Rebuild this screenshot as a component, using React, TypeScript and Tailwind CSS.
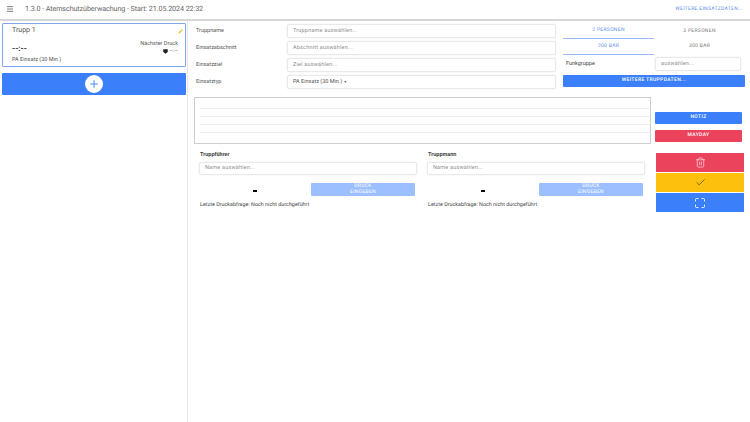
import { Menu, Pencil, Plus, Trash2, Check, Maximize } from "lucide-react";

const field = "h-[14px] flex items-center bg-white rounded-[2px] border border-[#e9e9e9] shadow-[0_0_2px_rgba(0,0,0,0.08)] px-[5px] text-[5.5px] text-[#8f8f8f] tracking-[0.2px]";

function Row({ label, children }: { label: string; children: React.ReactNode }) {
  return (
    <div className="flex items-center h-[14px]">
      <div className="w-[91px] text-[5.5px] text-[#555]">{label}</div>
      <div className="w-[269px]">{children}</div>
    </div>
  );
}

function Member({ name }: { name: string }) {
  return (
    <div className="w-[218px]">
      <div className="h-[9px] flex items-center pl-px text-[5.5px] font-bold text-[#444]">{name}</div>
      <div className={field + " !h-[13px] mt-[2px]"}>Name auswählen...</div>
      <div className="flex items-center mt-[8px]">
        <div className="w-[112px] flex justify-center"><span className="block w-[4px] h-[2px] bg-black mt-[3px]" /></div>
        <div className="w-[104px] h-[13px] rounded-[1px] bg-[#9cbfff] text-white text-[5px] leading-[5.5px] text-center flex items-center justify-center tracking-[0.3px]">DRUCK<br />EINGEBEN</div>
      </div>
      <div className="mt-[5px] pl-px text-[5.4px] text-[#444] whitespace-nowrap">Letzte Druckabfrage: Noch nicht durchgeführt</div>
    </div>
  );
}

export default function App() {
  return (
    <div className="w-[750px] h-[422px] bg-white overflow-hidden flex flex-col font-['Roboto',sans-serif] [text-rendering:geometricPrecision]">
      <header className="h-[21px] shrink-0 flex items-center justify-between border-b-2 border-[#d6d6d6] pl-[6px] pr-[7px]">
        <div className="flex items-center gap-[11px]">
          <Menu size={8} strokeWidth={2.5} className="text-[#666]" />
          <span className="text-[7.2px] text-[#666] tracking-[-0.1px]">1.3.0 - Atemschutzüberwachung - Start: 21.05.2024 22:32</span>
        </div>
        <span className="text-[5px] text-[#5c8df0] tracking-[0.3px]">WEITERE EINSATZDATEN...</span>
      </header>
      <div className="flex flex-1 min-h-0">
        <aside className="w-[188px] shrink-0 border-r border-[#e6e6e6] pl-[2px] pr-px pt-[2px]">
          <div className="h-[44px] border border-[#7fa6ec] rounded-[1px] relative pl-[9px] pr-[7px] pt-[2px]">
            <div className="text-[7px] text-[#555] leading-[8px]">Trupp 1</div>
            <Pencil size={5} fill="#f1c550" strokeWidth={1} className="absolute right-[2px] top-[5px] text-[#f1c550]" />
            <div className="flex justify-between items-start mt-[7px]">
              <div className="text-[8px] text-[#333] font-bold leading-[8px] mt-[4px]">--:--</div>
              <div className="text-right">
                <div className="text-[5.5px] text-[#555] leading-[7px]">Nächster Druck</div>
                <div className="flex items-center justify-end gap-[2px] text-[6px] text-[#666] leading-[6px]">
                  <svg width="5" height="5" viewBox="0 0 10 10"><path d="M0.5 0.5H9.5V6L5 9.5L0.5 6Z" fill="#222" /></svg>
                  <span>--:--</span>
                </div>
              </div>
            </div>
            <div className="text-[5.5px] text-[#555] leading-[7px] mt-[2.5px]">PA Einsatz (30 Min.)</div>
          </div>
          <div className="mt-[6px] h-[22px] bg-[#3b7ffb] rounded-[1px] flex items-center justify-center">
            <div className="w-[18px] h-[18px] rounded-full bg-white flex items-center justify-center">
              <Plus size={12} strokeWidth={1.8} className="text-[#3b7ffb]" />
            </div>
          </div>
        </aside>
        <main className="flex-1 pl-[6px] pt-[3px]">
          <div className="flex">
            <div className="w-[369px] pl-[2px] flex flex-col gap-[3px]">
              <Row label="Truppname"><div className={field}>Truppname auswählen...</div></Row>
              <Row label="Einsatzabschnitt"><div className={field}>Abschnitt auswählen...</div></Row>
              <Row label="Einsatzziel"><div className={field}>Ziel auswählen...</div></Row>
              <Row label="Einsatztyp"><div className={field + " !text-[#555] !tracking-normal"}>PA Einsatz (30 Min.) <span className="ml-[2px] text-[4px]">▾</span></div></Row>
            </div>
            <div className="w-[182px]">
              <div className="flex h-[15px] text-[5px] tracking-[0.3px]">
                <div className="w-[91px] border-b border-[#9cbcf5] text-[#5c8df0] flex items-center justify-center">2 PERSONEN</div>
                <div className="w-[91px] text-[#777] flex items-center justify-center">3 PERSONEN</div>
              </div>
              <div className="flex h-[16px] text-[5px] tracking-[0.3px]">
                <div className="w-[91px] border-b border-[#9cbcf5] text-[#5c8df0] flex items-center justify-center">200 BAR</div>
                <div className="w-[91px] text-[#777] flex items-center justify-center">300 BAR</div>
              </div>
              <div className="flex items-center h-[14px] mt-[2px]">
                <div className="w-[92px] pl-[3px] text-[5.5px] text-[#444]">Funkgruppe</div>
                <div className={field + " w-[86px]"}>auswählen...</div>
              </div>
              <div className="mt-[4px] h-[12px] bg-[#3b7ffb] rounded-[1px] text-white font-medium text-[5px] tracking-[0.35px] flex items-center justify-center">WEITERE TRUPPDATEN...</div>
            </div>
          </div>
          <div className="flex mt-[8px]">
            <div className="w-[457px] h-[47px] border border-[#cfcfcf] pt-[10px] pl-[5px] flex flex-col gap-[7px]">
              <div className="border-t border-[#f0f0f0]" />
              <div className="border-t border-[#f0f0f0]" />
              <div className="border-t border-[#f0f0f0]" />
              <div className="border-t border-[#f0f0f0]" />
            </div>
            <div className="ml-[4px] w-[87px] pt-[15px] flex flex-col gap-[6px]">
              <div className="h-[12px] bg-[#3b7ffb] rounded-[1px] text-white font-medium text-[5px] tracking-[0.35px] flex items-center justify-center">NOTIZ</div>
              <div className="h-[12px] bg-[#ec435d] rounded-[1px] text-white font-medium text-[5px] tracking-[0.35px] flex items-center justify-center">MAYDAY</div>
            </div>
          </div>
          <div className="flex mt-[6px]">
            <div className="w-[462px] pl-[5px] pt-[1px] flex gap-[10px]">
              <Member name="Truppführer" />
              <Member name="Truppmann" />
            </div>
            <div className="w-[88px] mt-[3px] flex flex-col gap-px">
              <div className="h-[19px] bg-[#ec435d] flex items-center justify-center"><Trash2 size={11} strokeWidth={1.8} className="text-[#f9c3cb]" /></div>
              <div className="h-[19px] bg-[#fdc00d] flex items-center justify-center"><Check size={11} strokeWidth={1.4} className="text-[#333]" /></div>
              <div className="h-[19px] bg-[#3b7ffb] flex items-center justify-center"><Maximize size={12} strokeWidth={1.8} className="text-white" /></div>
            </div>
          </div>
        </main>
      </div>
    </div>
  );
}
